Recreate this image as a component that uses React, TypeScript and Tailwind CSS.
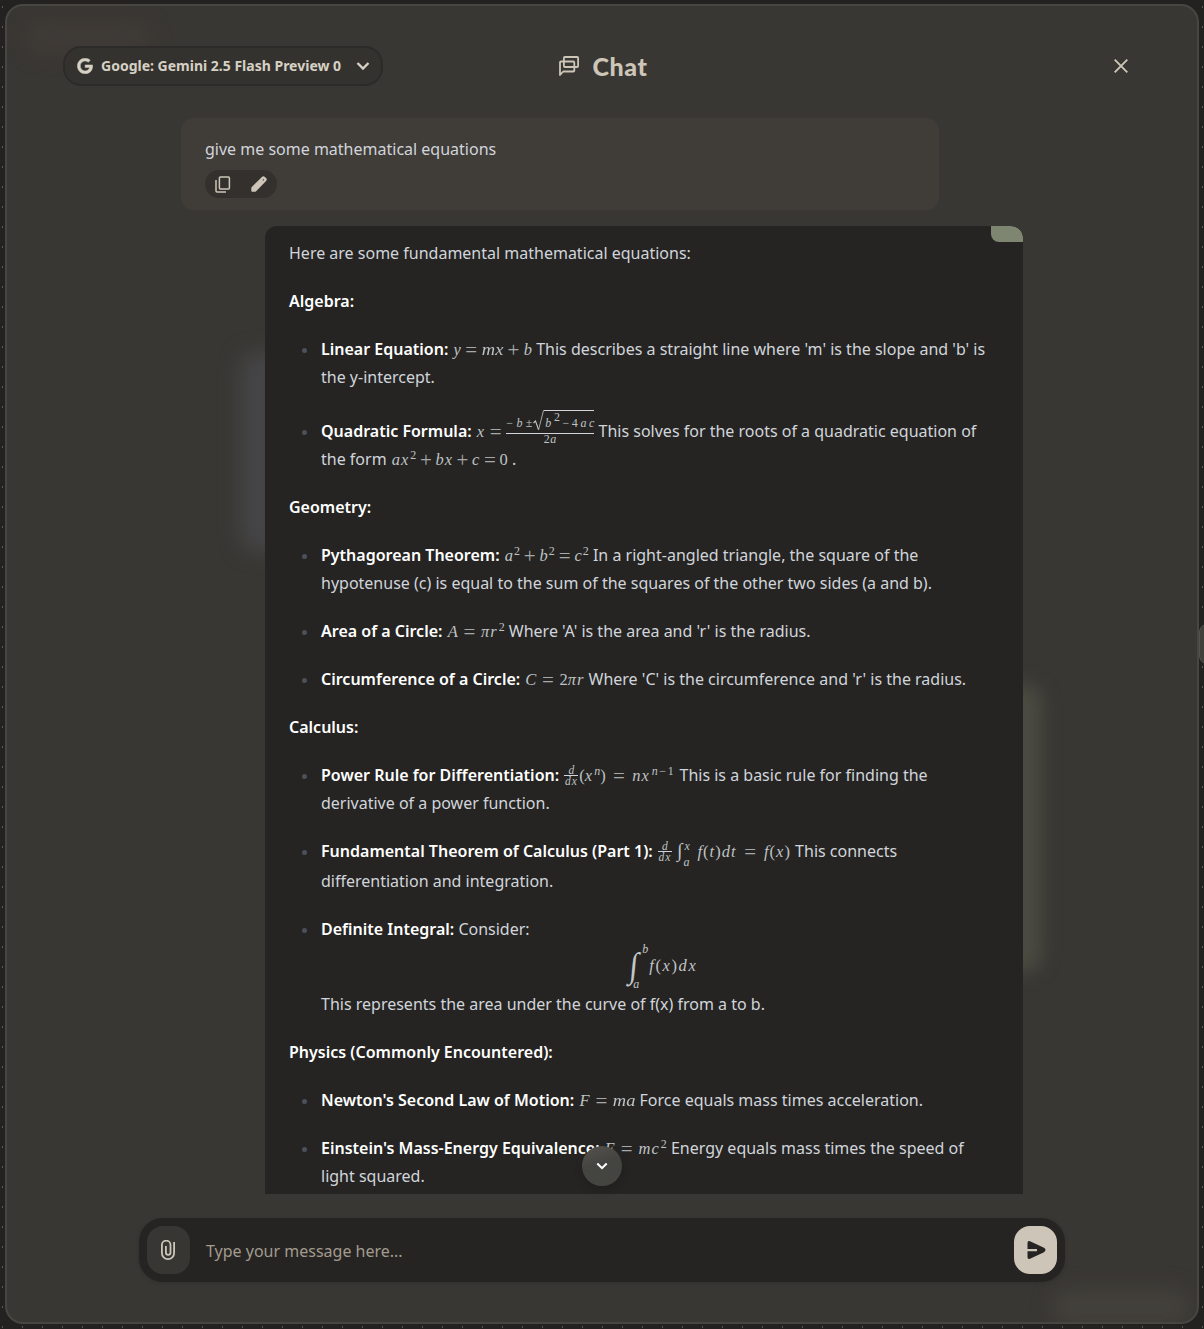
import type { ReactNode } from "react";
import { FaGoogle } from "react-icons/fa";

const Formula = ({ w, children }: { w: string; children: ReactNode }) => (
  <span
    className={`ml-px inline-flex items-baseline justify-between whitespace-nowrap font-['Liberation_Serif',serif] text-[16.5px] leading-none italic text-[#bfc3c6] ${w}`}
  >
    {children}
  </span>
);

const Op = ({ children }: { children: ReactNode }) => (
  <span className="w-3 translate-y-[2px] text-center text-[21px] leading-none not-italic text-[#a5a9a9]">{children}</span>
);
const Sup = ({ children }: { children: ReactNode }) => (
  <span className="ml-px inline-block -translate-y-[6px] text-[12px] leading-none">{children}</span>
);
const N = ({ children }: { children: ReactNode }) => <span className="not-italic">{children}</span>;
const V = ({ children }: { children: ReactNode }) => (
  <span className="inline-block tracking-[1px]">{children}</span>
);
/* Pair of letters set wide, as in a math italic face */
const W = ({ children }: { children: ReactNode }) => (
  <span className="mx-px inline-block scale-x-[1.12]">{children}</span>
);

const Derivative = ({ className }: { className: string }) => (
  <span className={`inline-flex h-[22px] w-[14px] flex-col items-center self-end text-[11.5px] leading-none ${className}`}>
    <span className="h-[10px] leading-[10px]">d</span>
    <span className="h-px w-full bg-[#d1d5db]" />
    <span className="h-[11px] leading-[11px] tracking-[1px]">dx</span>
  </span>
);

const Quadratic = () => (
  <span className="inline-flex h-[35px] w-[88px] -translate-y-[10px] flex-col items-center self-end text-[12px] leading-none">
    <span className="flex h-[23px] w-full">
      <span className="flex w-[27px] items-end justify-between pb-[4px] pr-px not-italic">
        <span>−</span>
        <span className="italic">b</span>
        <span>±</span>
      </span>
      <svg className="h-[21px] w-[11px]" viewBox="0 0 11 21" fill="none" stroke="#c2c6c8">
        <path d="M0.5 13 L2.5 11 L5.5 19.5" strokeWidth="1.1" />
        <path d="M5.5 20 L10.5 0.5 H11" strokeWidth="0.8" />
      </svg>
      <span className="flex h-[20px] w-[50px] items-end justify-between border-t border-[#d1d5db] pb-px pl-px">
        <span>b</span>
        <span className="-translate-y-[6px] not-italic">2</span>
        <span className="not-italic">−</span>
        <span className="not-italic">4</span>
        <span>a</span>
        <span>c</span>
      </span>
    </span>
    <span className="h-px w-full bg-[#d1d5db]" />
    <span className="h-[11px] leading-[11px] tracking-[0.5px]">
      <N>2</N>a
    </span>
  </span>
);

const Heading = ({ children }: { children: ReactNode }) => (
  <p className="h-7 font-semibold text-white">{children}</p>
);

const Item = ({ className = "", lines }: { className?: string; lines: ReactNode[] }) => (
  <li className={`flex ${className}`}>
    <span className="flex h-7 w-8 shrink-0 items-center pl-[13px] pt-[3px]">
      <span className="size-[5px] rounded-full bg-[#4b515b]" />
    </span>
    <div className="grow">
      {lines.map((line, i) => (
        <div key={i} className="h-7 whitespace-nowrap">
          {line}
        </div>
      ))}
    </div>
  </li>
);

const B = ({ children }: { children: ReactNode }) => <strong className="font-semibold text-white">{children}</strong>;

const Chevron = ({ className }: { className: string }) => (
  <svg className={className} viewBox="0 0 14 14" fill="none" stroke="currentColor" strokeWidth="2.4">
    <path d="M1.5 4 L7 9.5 L12.5 4" />
  </svg>
);

function Message() {
  return (
    <article className="relative ml-[84px] flex h-[968px] w-[758px] flex-col gap-5 overflow-hidden rounded-t-[12px] bg-[#252422] px-6 pt-[13px]">
      <span className="absolute right-0 top-0 h-4 w-8 rounded-bl-[8px] rounded-tr-[12px] bg-[#7e8571]" />
      <p className="h-7">Here are some fundamental mathematical equations:</p>
      <Heading>Algebra:</Heading>
      <ul className="flex flex-col gap-5">
        <Item
          lines={[
            <>
              <B>Linear Equation:</B>{" "}
              <Formula w="w-[78.5px]">
                <span>y</span>
                <Op>=</Op>
                <W>mx</W>
                <Op>+</Op>
                <span>b</span>
              </Formula>{" "}
              This describes a straight line where 'm' is the slope and 'b' is
            </>,
            "the y-intercept.",
          ]}
        />
        <Item
          className="pt-[6px]"
          lines={[
            <>
              <B>Quadratic Formula:</B>{" "}
              <Formula w="w-[117.5px]">
                <V>x</V>
                <Op>=</Op>
                <Quadratic />
              </Formula>{" "}
              This solves for the roots of a quadratic equation of
            </>,
            <>
              the form{" "}
              <Formula w="w-[116px]">
                <span>
                  <V>ax</V>
                  <Sup>
                    <N>2</N>
                  </Sup>
                </span>
                <Op>+</Op>
                <V>bx</V>
                <Op>+</Op>
                <V>c</V>
                <Op>=</Op>
                <N>0</N>
              </Formula>{" "}
              .
            </>,
          ]}
        />
      </ul>
      <Heading>Geometry:</Heading>
      <ul className="flex flex-col gap-5">
        <Item
          lines={[
            <>
              <B>Pythagorean Theorem:</B>{" "}
              <Formula w="w-[84px]">
                <span>
                  a
                  <Sup>
                    <N>2</N>
                  </Sup>
                </span>
                <Op>+</Op>
                <span>
                  b
                  <Sup>
                    <N>2</N>
                  </Sup>
                </span>
                <Op>=</Op>
                <span>
                  c
                  <Sup>
                    <N>2</N>
                  </Sup>
                </span>
              </Formula>{" "}
              In a right-angled triangle, the square of the
            </>,
            "hypotenuse (c) is equal to the sum of the squares of the other two sides (a and b).",
          ]}
        />
        <Item
          lines={[
            <>
              <B>Area of a Circle:</B>{" "}
              <Formula w="w-[57px]">
                <span>A</span>
                <Op>=</Op>
                <span>
                  <V>πr</V>
                  <Sup>
                    <N>2</N>
                  </Sup>
                </span>
              </Formula>{" "}
              Where 'A' is the area and 'r' is the radius.
            </>,
          ]}
        />
        <Item
          lines={[
            <>
              <B>Circumference of a Circle:</B>{" "}
              <Formula w="w-[59px]">
                <span>C</span>
                <Op>=</Op>
                <span>
                  <N>2</N>
                  <V>πr</V>
                </span>
              </Formula>{" "}
              Where 'C' is the circumference and 'r' is the radius.
            </>,
          ]}
        />
      </ul>
      <Heading>Calculus:</Heading>
      <ul className="flex flex-col gap-5">
        <Item
          lines={[
            <>
              <B>Power Rule for Differentiation:</B>{" "}
              <Formula w="w-[111px]">
                <span className="inline-flex items-baseline">
                  <Derivative className="-translate-y-[3px]" />
                  <span className="pl-px">
                    <N>(</N>
                    <V>x</V>
                    <Sup>n</Sup>
                    <N>)</N>
                  </span>
                </span>
                <Op>=</Op>
                <span>
                  <V>nx</V>
                  <span className="ml-[2px] inline-block -translate-y-[6px] text-[12px] leading-none tracking-[1.6px]">
                    n<N>−1</N>
                  </span>
                </span>
              </Formula>{" "}
              This is a basic rule for finding the
            </>,
            "derivative of a power function.",
          ]}
        />
        <Item
          className="pb-[2px]"
          lines={[
            <>
              <B>Fundamental Theorem of Calculus (Part 1):</B>{" "}
              <Formula w="w-[133px]">
                <span className="inline-flex items-baseline">
                  <Derivative className="-translate-y-[3px]" />
                  <span className="ml-[5px] text-[20px] leading-none">∫</span>
                  <span className="inline-flex h-[26px] translate-y-px flex-col justify-between self-end text-[12px] leading-[10px]">
                    <span className="pl-[2px]">x</span>
                    <span className="pl-px">a</span>
                  </span>
                </span>
                <span className="tracking-[1px]">
                  f<N>(</N>t<N>)</N>dt
                </span>
                <Op>=</Op>
                <span className="tracking-[1px]">
                  f<N>(</N>x<N>)</N>
                </span>
              </Formula>{" "}
              This connects
            </>,
            <span className="relative top-[2px]">differentiation and integration.</span>,
          ]}
        />
        <Item
          lines={[
            <>
              <B>Definite Integral:</B> Consider:
            </>,
            <span className="flex h-[47px] items-center justify-center pl-[6px] font-['Liberation_Serif',serif] text-[16.5px] leading-none italic text-[#c2c6c8]">
              <span className="flex h-[45px] items-center">
                <span className="inline-block -translate-y-px -skew-x-6 scale-x-90 text-[35px] leading-none">∫</span>
                <span className="flex h-full flex-col justify-between text-[12px] leading-[10px]">
                  <span className="pl-[4px]">b</span>
                  <span className="-ml-[5px]">a</span>
                </span>
              </span>
              <span className="ml-px tracking-[1.6px]">
                f<N>(</N>x<N>)</N>dx
              </span>
            </span>,
            <span className="relative top-[19px]">This represents the area under the curve of f(x) from a to b.</span>,
          ]}
          className="pb-[19px]"
        />
      </ul>
      <Heading>Physics (Commonly Encountered):</Heading>
      <ul className="flex flex-col gap-5">
        <Item
          lines={[
            <>
              <B>Newton's Second Law of Motion:</B>{" "}
              <Formula w="w-[56px]">
                <span>F</span>
                <Op>=</Op>
                <W>ma</W>
              </Formula>{" "}
              Force equals mass times acceleration.
            </>,
          ]}
        />
        <Item
          lines={[
            <>
              <B>Einstein's Mass-Energy Equivalence:</B>{" "}
              <Formula w="w-[62px]">
                <span>E</span>
                <Op>=</Op>
                <span>
                  <V>mc</V>
                  <Sup>
                    <N>2</N>
                  </Sup>
                </span>
              </Formula>{" "}
              Energy equals mass times the speed of
            </>,
            "light squared.",
          ]}
        />
      </ul>
    </article>
  );
}

export default function App() {
  return (
    <div className="relative h-[1329px] w-[1204px] overflow-hidden bg-[#232220] font-['Noto_Sans',sans-serif] text-[16px] leading-7 text-[#d1d5db]">
      <div className="absolute inset-0 bg-[conic-gradient(from_270deg_at_1px_2px,#5b5955_90deg,transparent_90deg)] bg-[length:20px_20px] bg-[position:2px_6px]" />
      <div className="absolute -right-[15px] top-[624px] h-10 w-5 rounded-[8px] border border-[#55534e] bg-[#42403b]" />
      <main className="relative ml-[5px] mt-[4px] flex h-[1320px] w-[1194px] flex-col overflow-hidden rounded-[18px] border-2 border-[#474641] bg-[#393733]">
        <div className="absolute left-[18px] top-[15px] h-[34px] w-[126px] rounded-[14px] bg-[#3f3a36] blur-[9px]" />
        <div className="absolute left-[233px] top-[346px] h-[200px] w-[100px] rounded-[16px] bg-[#454547] blur-[10px]" />
        <div className="absolute left-[950px] top-[678px] h-[288px] w-[84px] rounded-[16px] bg-[#4b4b41] blur-[9px]" />
        <div className="absolute left-[1046px] top-[1284px] h-[34px] w-[136px] rounded-[14px] bg-[#43413c] blur-[10px]" />

        <header className="relative flex h-[112px] shrink-0 items-start justify-between pl-[56px] pr-[56px] pt-[40px]">
          <button className="flex h-10 w-[320px] items-center rounded-[18px] border-2 border-[#2d2b2a] bg-[#34322f] pl-[12px] text-[14px] font-bold text-[#d6d1c4]">
            <FaGoogle className="size-4 stroke-current stroke-[14px]" />
            <span className="ml-[8px] w-[242px] whitespace-nowrap text-left">Google: Gemini 2.5 Flash Preview 0</span>
            <Chevron className="ml-[13px] size-[14px]" />
          </button>
          <h1 className="mr-[273px] flex h-10 items-center gap-[14px] font-['Lato',sans-serif] text-[25px] font-black text-[#cdc6b8]">
            <svg className="size-[20px]" viewBox="0 0 20 20" fill="none" stroke="currentColor" strokeWidth="1.8" strokeLinejoin="round">
              <path d="M1 19 V6.5 Q1 5.5 2 5.5 H14.3 Q15.3 5.5 15.3 6.5 V14.5 Q15.3 15.5 14.3 15.5 H4.2 Z" />
              <rect x="4.9" y="1" width="14.2" height="10" rx="1" />
            </svg>
            <span className="w-[60px] tracking-[0.6px]">Chat</span>
          </h1>
          <button className="flex size-10 items-center justify-center text-[#cdc6b8]">
            <svg className="size-[14px]" viewBox="0 0 14 14" stroke="currentColor" strokeWidth="1.9">
              <path d="M0.7 0.7 L13.3 13.3 M13.3 0.7 L0.7 13.3" />
            </svg>
          </button>
        </header>

        <section className="relative ml-[174px] flex flex-col gap-4">
          <article className="h-[92px] w-[758px] rounded-[12px] bg-[#403c38] px-6 pt-[17px]">
            <p className="h-7">give me some mathematical equations</p>
            <div className="mt-[7px] flex h-7 w-[72px] items-center justify-between rounded-full bg-[#34302d] px-[10px] text-[#cdc6b8]">
              <svg className="h-[17px] w-[16px]" viewBox="0 0 16 17" fill="none" stroke="currentColor" strokeWidth="1.5">
                <rect x="4.4" y="0.9" width="10" height="12.2" rx="1" />
                <path d="M1 4 V15 Q1 16 2 16 H11" />
              </svg>
              <svg className="size-4" viewBox="0 0 16 16" fill="currentColor">
                <path d="M0.3 14.8 V12 Q0.3 11.4 0.8 10.9 L10.9 0.9 Q12.4 -0.4 13.9 0.9 L15.1 2.1 Q16.4 3.6 15.1 5.1 L5.1 15.2 Q4.6 15.7 4 15.7 H1.2 Q0.3 15.7 0.3 14.8 Z" />
                <path d="M11.9 3.5 L12.6 4.2" stroke="#34302d" strokeWidth="1.3" />
              </svg>
            </div>
          </article>
          <Message />
        </section>

        <button className="absolute left-[575px] top-[1140px] flex size-10 items-center justify-center rounded-full bg-[linear-gradient(160deg,#56524d,#444440_45%)] text-white shadow-[0_4px_8px_rgba(0,0,0,0.15)]">
          <Chevron className="-mt-px size-[12px]" />
        </button>

        <footer className="relative ml-[132px] mt-[24px] flex h-16 w-[926px] items-center rounded-[24px] bg-[#252422] px-2 shadow-[0_1px_4px_rgba(0,0,0,0.15)]">
          <button className="flex h-12 w-[43px] items-center justify-center rounded-[16px] bg-[#383632] text-[#cdc6b8]">
            <svg className="mr-px h-[20px] w-[14px]" viewBox="0 0 14 20" fill="none" stroke="currentColor" strokeWidth="1.8">
              <path d="M13.1 2 V13 A6.1 6.1 0 0 1 0.9 13 V5 A4.3 4.3 0 0 1 9.5 5 V12.6 A2.3 2.3 0 0 1 4.9 12.6 V6" />
            </svg>
          </button>
          <span className="ml-4 grow pt-[2px] text-[#a29b8e]">Type your message here...</span>
          <button className="flex h-12 w-[43px] items-center justify-center rounded-[16px] bg-[#cdc6b8] text-[#252422]">
            <svg className="ml-[2px] h-[18px] w-[19px]" viewBox="0 0 19 18" fill="currentColor">
              <path d="M0.5 2 Q0.5 -0.5 3 0.3 L17 6.8 Q20 9 17 11.2 L3 17.7 Q0.5 18.5 0.5 16 V10.2 H10 V8 H0.5 Z" />
            </svg>
          </button>
        </footer>
      </main>
    </div>
  );
}
